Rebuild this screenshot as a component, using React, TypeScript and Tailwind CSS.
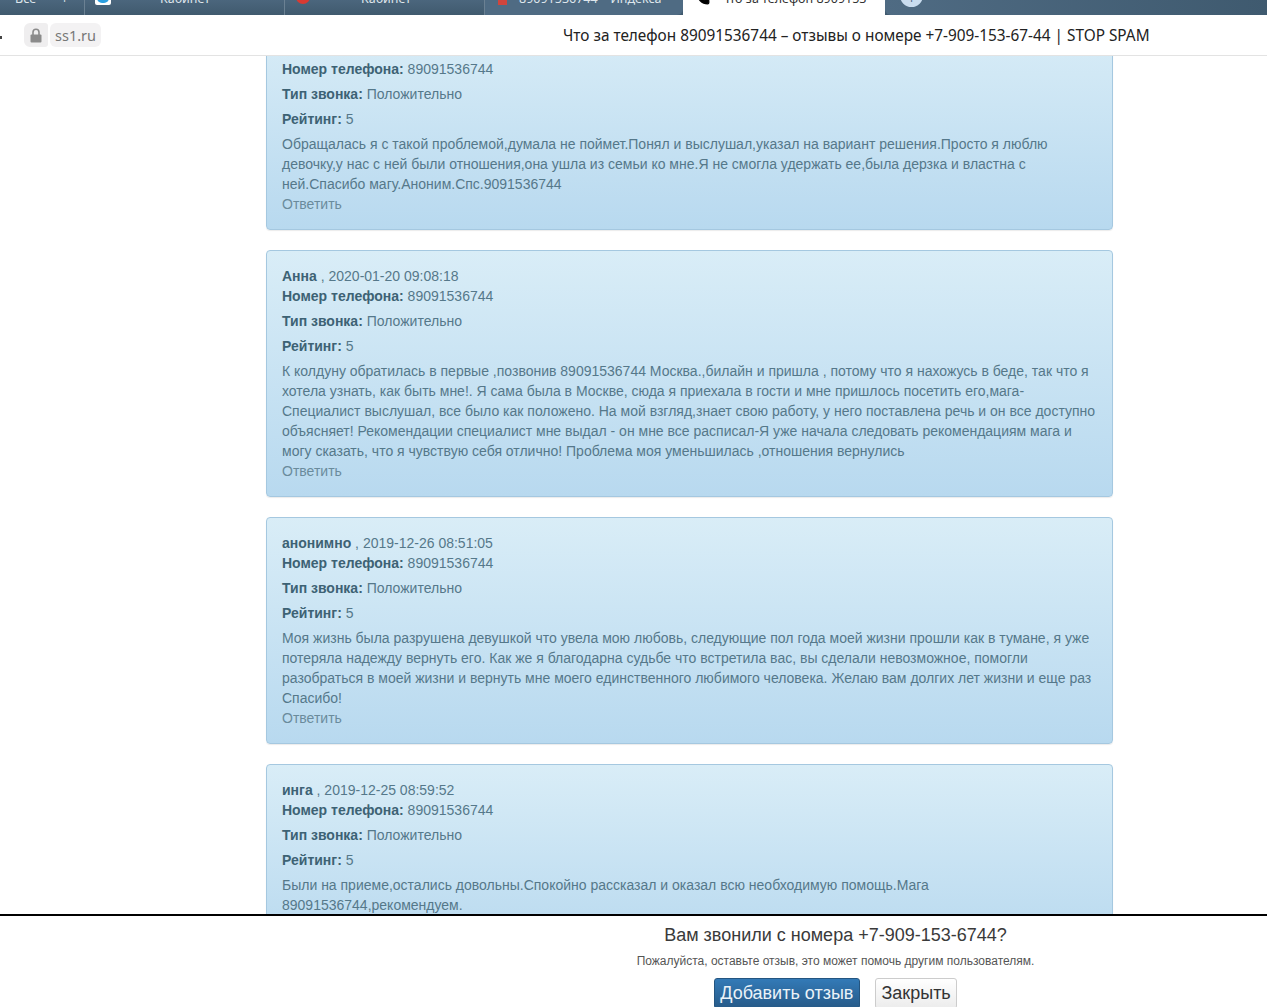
import { Phone } from "lucide-react";

type Review = {
  name: string;
  date: string;
  lines: string[];
};

const reviews: Review[] = [
  {
    name: "",
    date: "",
    lines: [
      "Обращалась я с такой проблемой,думала не поймет.Понял и выслушал,указал на вариант решения.Просто я люблю",
      "девочку,у нас с ней были отношения,она ушла из семьи ко мне.Я не смогла удержать ее,была дерзка и властна с",
      "ней.Спасибо магу.Аноним.Спс.9091536744",
    ],
  },
  {
    name: "Анна",
    date: "2020-01-20 09:08:18",
    lines: [
      "К колдуну обратилась в первые ,позвонив 89091536744 Москва.,билайн и пришла , потому что я нахожусь в беде, так что я",
      "хотела узнать, как быть мне!. Я сама была в Москве, сюда я приехала в гости и мне пришлось посетить его,мага-",
      "Специалист выслушал, все было как положено. На мой взгляд,знает свою работу, у него поставлена речь и он все доступно",
      "объясняет! Рекомендации специалист мне выдал - он мне все расписал-Я уже начала следовать рекомендациям мага и",
      "могу сказать, что я чувствую себя отлично! Проблема моя уменьшилась ,отношения вернулись",
    ],
  },
  {
    name: "анонимно",
    date: "2019-12-26 08:51:05",
    lines: [
      "Моя жизнь была разрушена девушкой что увела мою любовь, следующие пол года моей жизни прошли как в тумане, я уже",
      "потеряла надежду вернуть его. Как же я благодарна судьбе что встретила вас, вы сделали невозможное, помогли",
      "разобраться в моей жизни и вернуть мне моего единственного любимого человека. Желаю вам долгих лет жизни и еще раз",
      "Спасибо!",
    ],
  },
  {
    name: "инга",
    date: "2019-12-25 08:59:52",
    lines: [
      "Были на приеме,остались довольны.Спокойно рассказал и оказал всю необходимую помощь.Мага",
      "89091536744,рекомендуем.",
    ],
  },
];

function ReviewCard({ review }: { review: Review }) {
  return (
    <div className="w-[847px] shrink-0 rounded-[4px] border border-[#a5c8e0] bg-gradient-to-b from-[#d9edf7] to-[#b8d9ef] p-[15px] text-[14px] leading-[20px] text-[#55788a] shadow-[0_1px_1px_rgba(0,0,0,0.08)]">
      <div className="h-5">
        <b className="text-[#3d6274]">{review.name}</b> , {review.date}
      </div>
      <div className="mb-[5px]">
        <b className="text-[#3d6274]">Номер телефона:</b> 89091536744
      </div>
      <div className="mb-[5px]">
        <b className="text-[#3d6274]">Тип звонка:</b> Положительно
      </div>
      <div className="mb-[5px]">
        <b className="text-[#3d6274]">Рейтинг:</b> 5
      </div>
      {review.lines.map((line) => (
        <div key={line} className="whitespace-nowrap">
          {line}
        </div>
      ))}
      <div className="text-[#6a8b9c]">Ответить</div>
    </div>
  );
}

function TabBar() {
  return (
    <div className="relative z-10 flex h-[15px] shrink-0 items-end overflow-hidden bg-gradient-to-b from-[#4b667d] to-[#405a6e] pl-[15px] font-['Noto_Sans',sans-serif] text-[12.5px] leading-[16px] text-[#dfe6ec]">
      <div className="mb-[8px] flex w-[69px] shrink-0 gap-[25px] whitespace-nowrap">
        <span>Все</span>
        <span>+</span>
      </div>
      <div className="flex h-[15px] w-[200px] shrink-0 items-end border-l border-[#6b8193] pl-[10px]">
        <span className="mb-[10px] h-[14px] w-[16px] shrink-0 rounded-b-[2px] bg-white p-[2px]">
          <span className="block h-[10px] w-[12px] rounded-full bg-[#2b9fe0]" />
        </span>
        <span className="mb-[8px] ml-[49px]">Кабинет</span>
      </div>
      <div className="flex h-[15px] w-[200px] shrink-0 items-end border-l border-[#6b8193] pl-[11px]">
        <span className="mb-[11px] h-[16px] w-[14px] shrink-0 rounded-full bg-[#d93a32]" />
        <span className="mb-[8px] ml-[51px]">Кабинет</span>
      </div>
      <div className="flex h-[15px] w-[199px] shrink-0 items-end overflow-hidden rounded-br-[6px] border-l border-[#6b8193] bg-[#4f6b83] pl-[13px]">
        <span className="mb-[10px] h-[14px] w-[9px] shrink-0 bg-[#d0453d]" />
        <span className="mb-[8px] ml-[12px] whitespace-nowrap">89091536744 – Индекса</span>
      </div>
      <div className="flex h-[15px] w-[202px] shrink-0 items-end overflow-hidden bg-white pl-[13px] text-[#333]">
        <Phone className="mb-[10px] h-[14px] w-[14px] shrink-0 fill-black text-black" />
        <span className="mb-[8px] ml-[11px] whitespace-nowrap">Что за телефон 8909153</span>
      </div>
      <div className="flex h-[15px] flex-1 rounded-bl-[6px] bg-gradient-to-r from-[#4f6b83] to-[#3f5a6f] pl-[15px]">
        <span className="-mt-[16px] flex h-[23px] w-[23px] shrink-0 items-center justify-center rounded-full bg-[#c9dcee] pt-[7px] text-[#4c667f]">
          +
        </span>
      </div>
    </div>
  );
}

function AddressBar() {
  return (
    <div className="relative z-10 flex h-[41px] shrink-0 items-center border-b border-[#e3e3e3] bg-white font-['Noto_Sans',sans-serif]">
      <span className="mt-[4px] h-[3px] w-[2px] bg-[#444]" />
      <span className="ml-[22px] flex h-[24px] w-[24px] items-center justify-center rounded-l-[6px] rounded-r-[3px] bg-[#efeeef]">
        <svg width="12" height="15" viewBox="0 0 12 15">
          <path d="M3 7V4.2a3 3 0 0 1 6 0V7" fill="none" stroke="#8b8b8b" strokeWidth="1.6" />
          <rect x="0.5" y="6.5" width="11" height="8" rx="1" fill="#8b8b8b" />
        </svg>
      </span>
      <span className="ml-[2px] flex h-[24px] w-[51px] items-center justify-center rounded-[6px] bg-[#f3f2f3] pt-px text-[14.5px] text-[#777]">
        ss1.ru
      </span>
      <span className="ml-[462px] whitespace-nowrap pt-[2px] text-[15.35px] text-[#222]">
        Что за телефон 89091536744 – отзывы о номере +7-909-153-67-44 | STOP SPAM
      </span>
    </div>
  );
}

function Prompt() {
  return (
    <div className="absolute bottom-0 left-0 right-0 z-20 h-[93px] overflow-hidden border-t-2 border-black bg-white pl-[404px] text-center text-[#3a3a3a]">
      <div className="mt-[6px] text-[18px] leading-[26px]">Вам звонили с номера +7-909-153-6744?</div>
      <div className="mt-[5px] text-[12px] leading-[17px] text-[#555]">
        Пожалуйста, оставьте отзыв, это может помочь другим пользователям.
      </div>
      <div className="mt-[8px] flex justify-center gap-[15px]">
        <button className="rounded-[3px] border border-[#245580] bg-gradient-to-b from-[#337ab7] to-[#265a88] px-[5.5px] py-px text-[18px] leading-[27px] text-[#eaf2f8]">
          Добавить отзыв
        </button>
        <button className="rounded-[3px] border border-[#ccc] bg-gradient-to-b from-white to-[#ececec] px-[5.5px] py-px text-[18px] leading-[27px] text-[#333]">
          Закрыть
        </button>
      </div>
    </div>
  );
}

export default function App() {
  return (
    <div className="relative flex h-[1007px] w-[1267px] flex-col overflow-hidden bg-white font-['Liberation_Sans',Arial,sans-serif]">
      <TabBar />
      <AddressBar />
      <div className="flex min-h-0 flex-1 flex-col overflow-hidden pl-[266px]">
        <div className="-mt-[33px] flex flex-col gap-5">
          {reviews.map((review) => (
            <ReviewCard key={review.lines[0]} review={review} />
          ))}
        </div>
      </div>
      <Prompt />
    </div>
  );
}
